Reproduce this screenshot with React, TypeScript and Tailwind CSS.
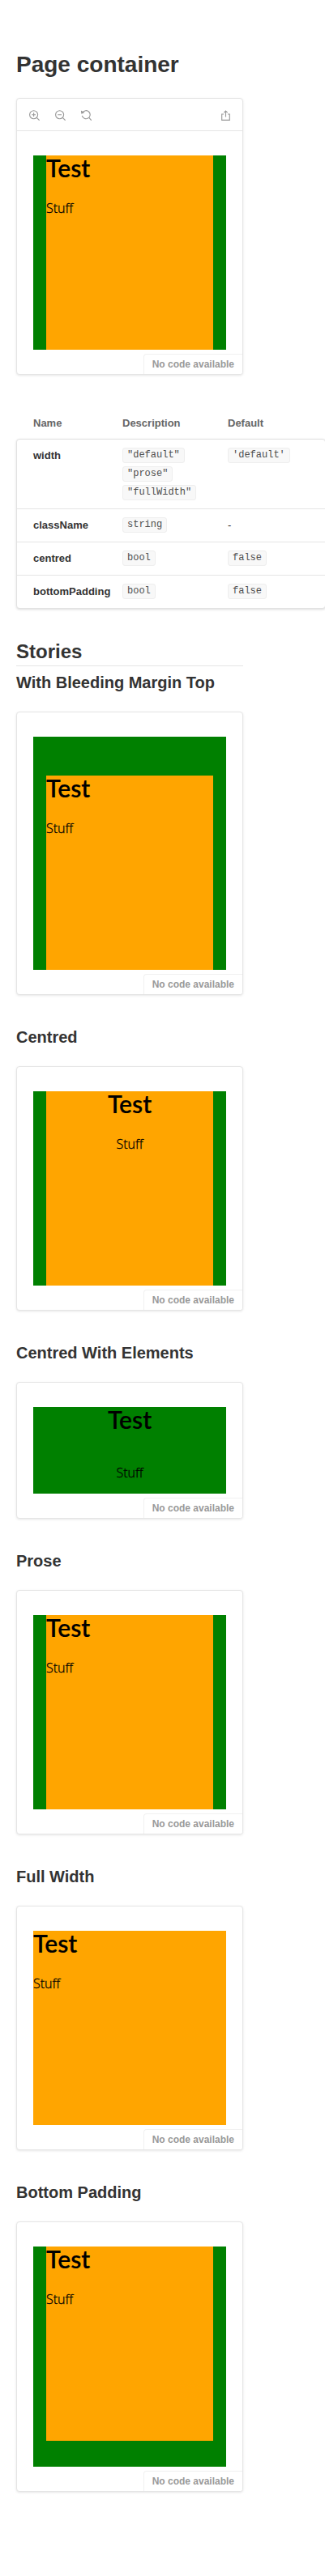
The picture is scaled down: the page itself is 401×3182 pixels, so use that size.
import React from "react";

function Icon({ children }: { children: React.ReactNode }) {
  return (
    <svg viewBox="0 0 13 13" className="size-[13px] fill-none stroke-[#999999]" strokeWidth="1.15">
      {children}
    </svg>
  );
}

function Lens() {
  return (
    <>
      <circle cx="5.6" cy="5.7" r="5" />
      <path d="M9.3 9.3L12.6 12.7" />
    </>
  );
}

function Toolbar() {
  return (
    <div className="flex h-10 items-center justify-between border-b border-[#e5e5e5] px-[14.5px] pt-px">
      <div className="flex gap-[19px]">
        <Icon>
          <Lens />
          <path d="M3.2 5.7H8M5.6 3.3V8.1" />
        </Icon>
        <Icon>
          <Lens />
          <path d="M3.2 5.7H8" />
        </Icon>
        <Icon>
          <path d="M1.9 3.1A5 5 0 1 1 1.3 6.8M9.8 9.3L12.8 12.7" />
          <path d="M0.5 1.4L3.2 3L0.9 3.9Z" className="fill-[#999999]" />
        </Icon>
      </div>
      <Icon>
        <path d="M4 5H1.7V12.3H11.3V5H9" />
        <path d="M6.5 1V8.4M4.3 3.2L6.5 1L8.7 3.2" />
      </Icon>
    </div>
  );
}

type Kind = "default" | "bleed" | "centred" | "elements" | "full" | "bottom";

function Stuff() {
  return (
    <p className="font-['Open_Sans',sans-serif] text-base leading-6 font-light [-webkit-text-stroke:0.3px_black]">
      Stuff
    </p>
  );
}

function Demo({ kind }: { kind: Kind }) {
  const title = (
    <h1 className="text-[30px] leading-[30px] font-semibold [-webkit-text-stroke:0.15px_black]">Test</h1>
  );
  if (kind === "elements") {
    return (
      <div className="flex h-[107px] flex-col items-center gap-[39px] bg-[#008000]">
        {title}
        <Stuff />
      </div>
    );
  }
  return (
    <div
      className={
        "bg-[#008000] " +
        (kind === "full" ? "" : "px-4 ") +
        (kind === "bleed" ? "pt-12 " : "") +
        (kind === "bottom" ? "pb-8" : "")
      }
    >
      <div className={"flex h-60 flex-col gap-[23px] bg-[#ffa500] " + (kind === "centred" ? "text-center" : "")}>
        {title}
        <Stuff />
      </div>
    </div>
  );
}

function Preview({ kind, toolbar = false }: { kind: Kind; toolbar?: boolean }) {
  return (
    <div className="relative w-full overflow-hidden rounded-[4px] border border-[#e5e5e5] bg-white shadow-[0_1px_3px_0_rgba(0,0,0,0.1)]">
      {toolbar && <Toolbar />}
      <div className="px-5 py-[30px] font-['Lato',sans-serif] text-black">
        <Demo kind={kind} />
      </div>
      <div className="absolute right-0 bottom-0 h-[25px] rounded-tl-[4px] border-t border-l border-[#f0f0f0] bg-white px-[10px] py-1 text-xs leading-4 font-bold text-[#999999]">
        No code available
      </div>
    </div>
  );
}

function Code({ children }: { children: string }) {
  return (
    <span className="h-[19px] rounded-[3px] border border-[#eeeeee] bg-[#f8f8f8] px-[5px] font-['Liberation_Mono',monospace] text-xs leading-4 text-[#4d4d4d]">
      {children}
    </span>
  );
}

const ROWS = [
  { name: "width", types: ['"default"', '"prose"', '"fullWidth"'], def: "'default'" },
  { name: "className", types: ["string"], def: "" },
  { name: "centred", types: ["bool"], def: "false" },
  { name: "bottomPadding", types: ["bool"], def: "false" },
];

function Props() {
  return (
    <div className="mt-10 w-[382px] text-[13px] leading-5">
      <div className="grid grid-cols-[110px_130px_1fr] pt-[10px] pb-[9px] pl-[21px] font-bold text-[#666666]">
        <span>Name</span>
        <span>Description</span>
        <span>Default</span>
      </div>
      <div className="rounded-[4px] border border-[#e2e2e2] bg-white shadow-[0_1px_3px_0_rgba(0,0,0,0.14)]">
        {ROWS.map((r, i) => (
          <div
            key={r.name}
            className={
              "grid grid-cols-[110px_130px_1fr] items-start pt-[10px] pl-5 " +
              (i === 0 ? "h-[86px] border-b border-[#e5e5e5]" : i < 3 ? "h-[41px] border-b border-[#e5e5e5]" : "h-10")
            }
          >
            <span className="font-bold text-[#333333]">{r.name}</span>
            <span className="flex flex-col items-start gap-1">
              {r.types.map((t) => (
                <Code key={t}>{t}</Code>
              ))}
            </span>
            <span className="flex items-start">{r.def ? <Code>{r.def}</Code> : "-"}</span>
          </div>
        ))}
      </div>
    </div>
  );
}

const STORIES: { title: string; kind: Kind }[] = [
  { title: "With Bleeding Margin Top", kind: "bleed" },
  { title: "Centred", kind: "centred" },
  { title: "Centred With Elements", kind: "elements" },
  { title: "Prose", kind: "default" },
  { title: "Full Width", kind: "full" },
  { title: "Bottom Padding", kind: "bottom" },
];

export default function App() {
  return (
    <div className="h-[3182px] w-full overflow-hidden bg-white px-5 pt-16 font-['Liberation_Sans',Arial,sans-serif] text-[#333333]">
      <div className="w-[280px]">
        <h1 className="mb-[25px] text-[28px] leading-8 font-bold whitespace-nowrap">Page container</h1>
        <Preview kind="default" toolbar />
        <Props />
        <h2 className="mt-[37px] h-[34px] border-b border-[#e5e5e5] text-2xl leading-8 font-bold">Stories</h2>
        <div className="mt-2 flex flex-col gap-10">
          {STORIES.map((s) => (
            <section key={s.title}>
              <h3 className="mb-6 text-xl leading-6 font-bold whitespace-nowrap">{s.title}</h3>
              <Preview kind={s.kind} />
            </section>
          ))}
        </div>
      </div>
    </div>
  );
}
